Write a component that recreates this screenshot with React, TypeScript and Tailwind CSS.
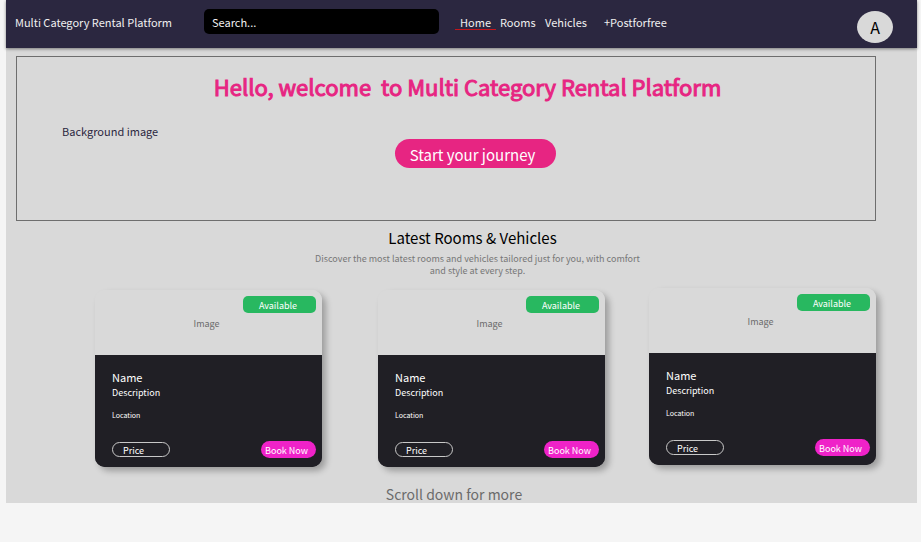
type CardProps = { className: string };

function ListingCard({ className }: CardProps) {
  return (
    <article
      className={`min-w-0 flex-1 overflow-hidden rounded-[10px] bg-linear-to-b from-[#d9d9d9] from-50% to-[#201f25] to-50% text-white shadow-[4px_4px_6px_rgba(0,0,0,0.28)] ${className}`}
    >
      <div className="flex h-[65px] flex-col bg-[#d9d9d9] pt-[6px] pr-[6px]">
        <span className="flex h-[17px] w-[73px] items-center justify-center self-end rounded-[5px] bg-[#28b860] pt-[2px] pr-[3px] text-[9px]">
          Available
        </span>
        <span className="pt-[3px] pr-[4px] pl-[6px] text-center text-[9px] leading-[16px] text-[#6b6b6b]">
          Image
        </span>
      </div>
      <div className="flex flex-col bg-[#201f25] pt-[13px] pr-[6px] pb-[9px] pl-[17px]">
        <h3 className="text-[11px] leading-[18px]">Name</h3>
        <p className="mt-px text-[9px] leading-[12px]">Description</p>
        <p className="mt-[10px] text-[7px] leading-[12px]">Location</p>
        <div className="mt-[20px] flex items-center justify-between">
          <span className="flex h-[15px] w-[58px] items-center rounded-full border border-[#c8c8c8] pt-[2px] pl-[10px] text-[9px]">
            Price
          </span>
          <button className="flex h-[17px] w-[55px] items-center justify-center rounded-full bg-[#ef22c8] pt-[2px] pr-[4px] text-[9px] whitespace-nowrap">
            Book Now
          </button>
        </div>
      </div>
    </article>
  );
}

export default function App() {
  return (
    <div className="min-h-screen bg-[#f5f5f5] pr-[4px] pl-[6px] font-['Noto_Sans_CJK_SC',sans-serif]">
      <div className="bg-[#d9d9d9]">
        <header className="flex h-[48px] items-center bg-[#2b2740] pr-[24px] pl-[9px] text-[11px] text-[#f0f0f0] shadow-[0_1px_3px_rgba(0,0,0,0.45)]">
          <span className="w-[189px] shrink-0 pb-[4px] whitespace-nowrap">Multi Category Rental Platform</span>
          <input
            type="text"
            aria-label="Search"
            placeholder="Search..."
            className="mb-[6px] h-[25px] w-[235px] rounded-[5px] bg-black px-[8px] pt-px text-[11px] text-white outline-none placeholder:text-[#f0f0f0]"
          />
          <nav className="ml-[16px] flex items-start pb-[3px] leading-[14px]">
            <a href="#home" className="w-[41px] border-b border-[#c4161c] text-center">
              Home
            </a>
            <a href="#rooms" className="ml-[4px] w-[36px]">Rooms</a>
            <a href="#vehicles" className="ml-[9px] w-[42px]">Vehicles</a>
            <a href="#post" className="ml-[17px]">+Postforfree</a>
          </nav>
          <button
            aria-label="Account"
            className="mt-[6px] ml-auto h-[32px] w-[36px] rounded-[50%] bg-[#d9d9d9] text-[16px] text-black"
          >
            A
          </button>
        </header>
        <main>
          <section className="mt-[8px] mr-[41px] ml-[10px] flex h-[165px] flex-col items-center border border-[#6e6e6e]">
            <h1 className="mt-[12px] ml-[43px] text-[22px] leading-[34px] whitespace-pre text-[#e72582] [-webkit-text-stroke:1px_#e72582]">
              {"Hello, welcome  to Multi Category Rental Platform"}
            </h1>
            <p className="mt-[20px] ml-[45px] self-start text-[11px] leading-[16px] text-[#2b2740]">Background image</p>
            <button className="ml-[58px] h-[29px] w-[161px] rounded-full bg-[#e72582] pt-[2px] pr-[5px] text-[15px] leading-[22px] text-white">
              Start your journey
            </button>
          </section>
          <section className="pl-[89px] pr-[41px]">
            <div className="mr-[16px] flex flex-col items-center pt-[6px]">
              <h2 className="mr-[10px] text-[15px] leading-[22px] text-black">Latest Rooms &amp; Vehicles</h2>
              <p className="mt-[4px] w-[334px] text-center text-[9px] leading-[12px] text-[#777777]">
                Discover the most latest rooms and vehicles tailored just for you, with comfort and style at every step.
              </p>
            </div>
            <div className="mt-[11px] flex items-start">
              <ListingCard className="mt-[2px] mr-[56px]" />
              <ListingCard className="mt-[2px] mr-[44px]" />
              <ListingCard className="" />
            </div>
            <p className="mt-[18px] mr-[63px] text-center text-[14px] leading-[18px] text-[#6b6b6b]">Scroll down for more</p>
          </section>
        </main>
      </div>
    </div>
  );
}
